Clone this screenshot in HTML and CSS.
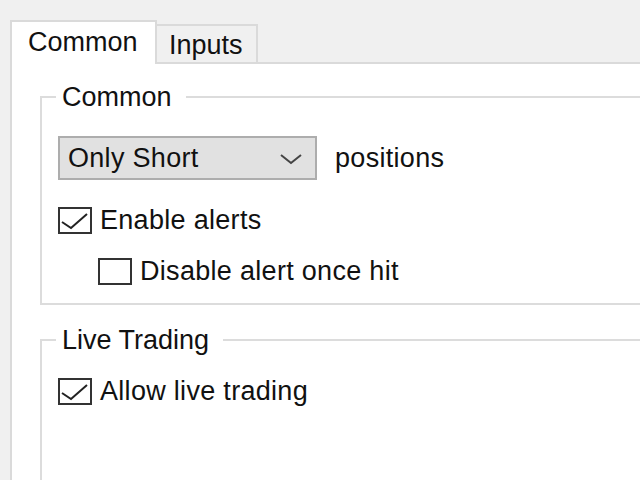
FILE: index.html
```html
<!DOCTYPE html>
<html lang="en">
<head>
  <meta charset="UTF-8">
  <title>Strategy settings</title>
  <link rel="stylesheet" href="styles.css">
</head>
<body>

<div class="tabs">
  <div class="tab active">Common</div>
  <div class="tab">Inputs</div>
</div>

<div class="panel">
  <fieldset class="group">
    <legend>Common</legend>
    <div class="row">
      <div class="combo">
        <span>Only Short</span>
        <svg class="chevron" width="24" height="12" viewBox="0 0 24 12">
          <path d="M2 2 L12 10 L22 2" fill="none" stroke="#444" stroke-width="2"/>
        </svg>
      </div>
      <span class="after-combo">positions</span>
    </div>
    <label class="check first">
      <span class="box">
        <svg width="30" height="23" viewBox="0 0 30 23"><path d="M2 13 L11 19 L27 5" fill="none" stroke="#222" stroke-width="2"/></svg>
      </span>
      Enable alerts
    </label>
    <label class="check indent">
      <span class="box"></span>
      Disable alert once hit
    </label>
  </fieldset>

  <fieldset class="group live">
    <legend>Live Trading</legend>
    <label class="check first">
      <span class="box">
        <svg width="30" height="23" viewBox="0 0 30 23"><path d="M2 13 L11 19 L27 5" fill="none" stroke="#222" stroke-width="2"/></svg>
      </span>
      Allow live trading
    </label>
  </fieldset>
</div>

</body>
</html>
```

FILE: styles.css
```css
/* base window */
body {
  margin: 0;
  height: 480px;
  overflow: hidden;
  background-color: #f0f0f0;
  font-family: "Liberation Sans", Arial, sans-serif;
  font-size: 27px;
  letter-spacing: 0.3px;
  color: #111;
}

/* tab strip */
.tabs {
  display: flex;
  align-items: flex-end;
  height: 42px;
  padding: 20px 0 0 10px;
  box-sizing: content-box;
}

.tab {
  box-sizing: border-box;
  width: 101px;
  height: 38px;
  padding-left: 12px;
  line-height: 38px;
  letter-spacing: 0;
  background-color: #f0f0f0;
  border: 2px solid #dadada;
  border-bottom: none;
  border-left: none;
}

.tab.active {
  width: 147px;
  height: 44px;
  margin-bottom: -2px;
  padding-left: 16px;
  line-height: 40px;
  background-color: #fff;
  border-left: 2px solid #dadada;
  position: relative;
  z-index: 1;
}

/* page under tabs */
.panel {
  height: 418px;
  margin-left: 10px;
  overflow: hidden;
  background-color: #fff;
  border-top: 2px solid #dadada;
  border-left: 2px solid #dadada;
  padding-top: 18px;
  box-sizing: border-box;
}

.group {
  width: 604px; /* right edge falls just outside the window */
  margin: 0 0 0 28px;
  padding: 24px 0 0 16px;
  height: 223px;
  box-sizing: border-box;
  border: 2px solid #dcdcdc;
}

.group legend {
  margin-left: -2px;
  padding: 0 14px 0 6px;
  line-height: 30px;
  letter-spacing: 0;
}

.group.live {
  margin-top: 20px;
  height: 160px;
  padding-top: 23px;
}

/* dropdown */
.row {
  display: flex;
  align-items: center;
  gap: 18px;
}

.combo {
  display: flex;
  align-items: center;
  justify-content: space-between;
  box-sizing: border-box;
  width: 259px;
  height: 44px;
  padding: 0 12px 0 8px;
  background-color: #e1e1e1;
  border: 2px solid #adadad;
}

.chevron {
  margin-top: 2px;
}

/* checkboxes */
.check {
  display: flex;
  align-items: center;
  gap: 8px;
  height: 27px;
  margin-top: 24px;
}

.check.first {
  margin-top: 27px;
}

.group.live .check.first {
  margin-top: 0;
}

.check.indent {
  margin-left: 40px;
}

.box {
  display: flex;
  align-items: center;
  justify-content: center;
  box-sizing: border-box;
  width: 34px;
  height: 27px;
  background-color: #fff;
  border: 2px solid #333;
}
```
